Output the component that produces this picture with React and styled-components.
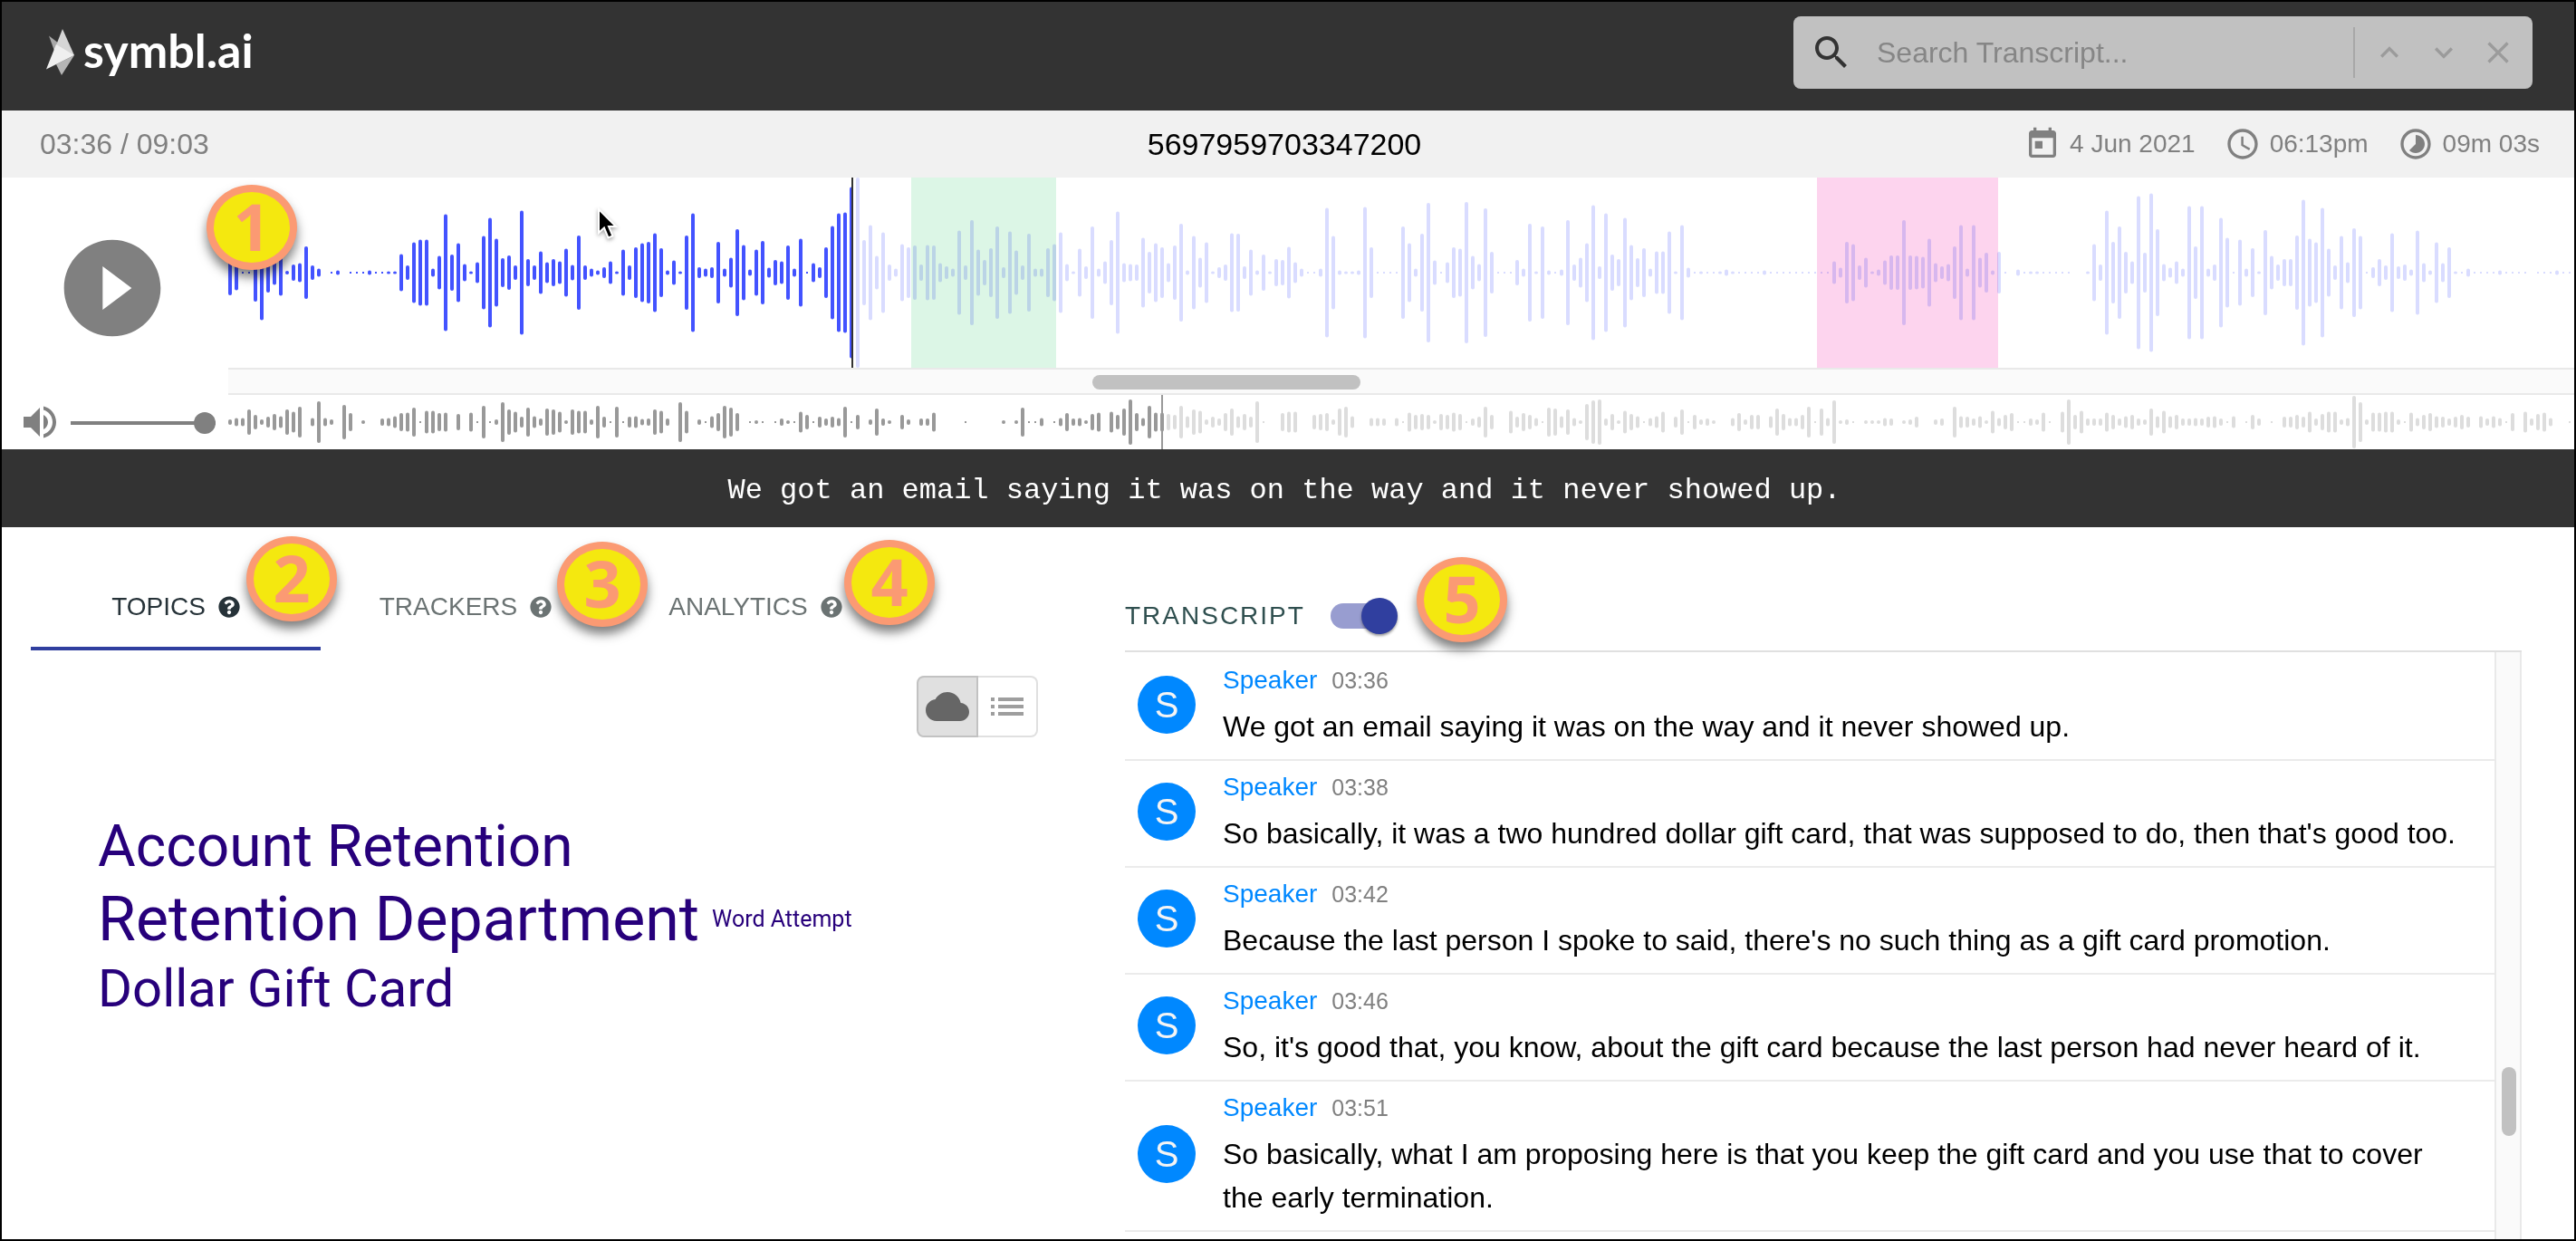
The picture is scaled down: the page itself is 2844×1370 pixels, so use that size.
import React, { useState } from "react";
import styled, { createGlobalStyle, css } from "styled-components";
import { FaQuestionCircle } from "react-icons/fa";

const GlobalStyle = createGlobalStyle`
  *, *::before, *::after { box-sizing: border-box; }
  body { margin: 0; background: #fff; }
  body, button, input { font-family: "Liberation Sans", Arial, sans-serif; }
  button { border: 0; padding: 0; background: none; cursor: pointer; }
`;

/* ---------- data ---------- */

const WAVE = [
  75, 58, 2, 2, 96, 158, 66, 40, 77, 6, 27, 31, 87, 24, 13, 0, 2, 8, 0, 2, 2, 2, 8, 2, 2, 5, 5, 62, 24, 100,
  110, 110, 13, 55, 194, 60, 97, 29, 5, 34, 121, 181, 113, 48, 57, 24, 205, 45, 24, 71, 34, 45, 37, 79, 26, 123, 24, 13, 8, 18,
  37, 5, 76, 24, 84, 97, 102, 131, 81, 8, 40, 5, 123, 197, 18, 13, 18, 102, 13, 50, 144, 92, 10, 76, 105, 16, 42, 37, 90, 13,
  113, 2, 31, 18, 84, 155, 197, 200, 284, 315, 108, 157, 55, 134, 27, 13, 95, 84, 90, 27, 92, 90, 31, 21, 13, 140, 24, 174, 76, 42,
  81, 153, 18, 136, 73, 24, 129, 13, 13, 81, 95, 134, 29, 5, 79, 21, 153, 13, 37, 108, 202, 31, 29, 27, 115, 69, 97, 84, 31, 90,
  162, 8, 121, 50, 100, 5, 18, 27, 131, 129, 21, 76, 8, 60, 5, 45, 42, 86, 34, 13, 2, 2, 13, 215, 121, 8, 5, 5, 8, 218,
  84, 2, 2, 2, 2, 153, 97, 13, 129, 231, 40, 2, 34, 84, 79, 234, 55, 29, 213, 69, 2, 2, 2, 42, 13, 162, 5, 153, 8, 2,
  10, 174, 27, 50, 97, 223, 21, 197, 60, 45, 181, 92, 48, 81, 13, 71, 71, 136, 5, 157, 16, 2, 5, 2, 2, 5, 10, 5, 2, 2,
  2, 2, 8, 2, 2, 2, 2, 2, 2, 2, 2, 2, 2, 37, 16, 102, 95, 24, 50, 5, 10, 40, 57, 57, 174, 57, 55, 52, 113, 31,
  21, 29, 87, 157, 13, 157, 50, 66, 8, 69, 2, 0, 10, 2, 5, 5, 2, 2, 2, 2, 2, 0, 0, 5, 95, 27, 205, 102, 153, 69,
  37, 254, 66, 262, 144, 29, 16, 37, 13, 220, 87, 220, 13, 27, 181, 115, 2, 110, 13, 81, 5, 141, 55, 27, 45, 45, 123, 241, 113, 100,
  215, 79, 24, 121, 34, 147, 121, 2, 18, 45, 24, 131, 21, 27, 10, 140, 31, 8, 100, 31, 84, 5, 2, 13, 2, 2, 2, 2, 8, 2,
  2, 2, 2, 0, 2, 2, 2, 8, 2, 2,
];

const OVERVIEW = [
  9, 14, 14, 42, 24, 9, 18, 27, 20, 42, 35, 51, 0, 14, 69, 14, 9, 0, 57, 30, 0, 6, 0, 0, 12, 14, 20, 30, 32, 48,
  2, 38, 38, 30, 32, 0, 27, 0, 32, 2, 54, 2, 9, 66, 42, 35, 18, 48, 20, 12, 45, 42, 35, 6, 42, 38, 38, 9, 54, 18,
  2, 51, 2, 18, 20, 10, 12, 42, 38, 12, 0, 66, 38, 0, 9, 2, 20, 30, 54, 48, 30, 0, 2, 6, 2, 0, 2, 12, 6, 2,
  35, 24, 2, 18, 12, 18, 14, 51, 2, 24, 0, 9, 45, 12, 6, 0, 24, 9, 0, 12, 12, 32, 0, 0, 0, 0, 3, 0, 0, 0,
  0, 0, 6, 0, 6, 48, 2, 2, 14, 0, 3, 14, 30, 12, 14, 6, 27, 32, 0, 35, 24, 45, 75, 30, 14, 54, 32, 32, 27, 24,
  54, 20, 42, 38, 9, 18, 12, 30, 45, 20, 27, 18, 69, 2, 0, 0, 30, 35, 35, 0, 0, 24, 27, 30, 9, 45, 51, 20, 0, 0,
  14, 14, 12, 0, 14, 2, 32, 24, 27, 24, 6, 27, 24, 32, 27, 2, 12, 18, 51, 24, 0, 0, 38, 18, 30, 24, 14, 2, 48, 45,
  20, 42, 14, 6, 60, 72, 75, 12, 27, 6, 38, 27, 20, 2, 14, 20, 35, 0, 18, 42, 2, 24, 9, 12, 6, 0, 0, 14, 30, 9,
  24, 24, 0, 20, 45, 27, 14, 14, 24, 51, 2, 45, 14, 72, 6, 9, 2, 0, 6, 6, 6, 14, 12, 0, 6, 9, 18, 0, 0, 9,
  12, 0, 51, 20, 18, 12, 20, 6, 38, 14, 24, 30, 2, 2, 12, 9, 32, 2, 0, 35, 75, 24, 38, 12, 12, 12, 32, 24, 12, 20,
  24, 12, 9, 45, 20, 38, 20, 24, 12, 12, 14, 12, 18, 20, 12, 2, 20, 0, 2, 24, 12, 0, 2, 0, 18, 18, 24, 18, 35, 12,
  27, 35, 35, 9, 14, 87, 66, 9, 32, 32, 35, 35, 9, 2, 32, 14, 24, 30, 20, 18, 12, 18, 24, 18, 0, 20, 12, 20, 14, 2,
  30, 0, 35, 12, 27, 32, 14, 0, 0, 2,
];

const REGIONS = [
  { x: 754, width: 160, fill: "#dcf6e6" },
  { x: 1754, width: 200, fill: "#fdd4ee" },
];

const CAPTION = "We got an email saying it was on the way and it never showed up.";

const LINES = [
  ["03:36", CAPTION],
  ["03:38", "So basically, it was a two hundred dollar gift card, that was supposed to do, then that's good too."],
  ["03:42", "Because the last person I spoke to said, there's no such thing as a gift card promotion."],
  ["03:46", "So, it's good that, you know, about the gift card because the last person had never heard of it."],
  ["03:51", "So basically, what I am proposing here is that you keep the gift card and you use that to cover the early termination."],
];

const TABS = [
  { name: "TOPICS", badge: 2, left: 238, top: -30 },
  { name: "TRACKERS", badge: 3, left: 261, top: -24 },
  { name: "ANALYTICS", badge: 4, left: 258, top: -26 },
];

const ICONS = {
  search: "M15.5 14h-.79l-.28-.27C15.41 12.59 16 11.11 16 9.5 16 5.91 13.09 3 9.5 3S3 5.91 3 9.5 5.91 16 9.5 16c1.61 0 3.09-.59 4.23-1.57l.27.28v.79l5 4.99L20.49 19l-4.99-5zm-6 0C7.01 14 5 11.99 5 9.5S7.01 5 9.5 5 14 7.01 14 9.5 11.99 14 9.5 14z",
  up: "M12 8l-6 6 1.41 1.41L12 10.83l4.59 4.58L18 14z",
  down: "M16.59 8.59L12 13.17 7.41 8.59 6 10l6 6 6-6z",
  close: "M19 6.41L17.59 5 12 10.59 6.41 5 5 6.41 10.59 12 5 17.59 6.41 19 12 13.41 17.59 19 19 17.59 13.41 12z",
  today: "M19 3h-1V1h-2v2H8V1H6v2H5c-1.11 0-1.99.9-1.99 2L3 19c0 1.1.89 2 2 2h14c1.1 0 2-.9 2-2V5c0-1.1-.9-2-2-2zm0 16H5V8h14v11zM7 10h5v5H7z",
  clock: "M11.99 2C6.47 2 2 6.48 2 12s4.47 10 9.99 10C17.52 22 22 17.52 22 12S17.52 2 11.99 2zM12 20c-4.42 0-8-3.58-8-8s3.58-8 8-8 8 3.58 8 8-3.58 8-8 8zm.5-13H11v6l5.25 3.15.75-1.23-4.5-2.67z",
  timelapse: "M16.24 7.76C15.07 6.59 13.54 6 12 6v6l-4.24 4.24c2.34 2.34 6.14 2.34 8.49 0 2.34-2.34 2.34-6.14-.01-8.48zM12 2C6.48 2 2 6.48 2 12s4.48 10 10 10 10-4.48 10-10S17.52 2 12 2zm0 18c-4.42 0-8-3.58-8-8s3.58-8 8-8 8 3.58 8 8-3.58 8-8 8z",
  play: "M12 2C6.48 2 2 6.48 2 12s4.48 10 10 10 10-4.48 10-10S17.52 2 12 2zm-2 14.5v-9l6 4.5-6 4.5z",
  volume: "M3 9v6h4l5 5V4L7 9H3zm13.5 3c0-1.77-1.02-3.29-2.5-4.03v8.05c1.48-.73 2.5-2.25 2.5-4.02zM14 3.23v2.06c2.89.86 5 3.54 5 6.71s-2.11 5.85-5 6.71v2.06c4.01-.91 7-4.49 7-8.77s-2.99-7.86-7-8.77z",
  cloud: "M19.35 10.04C18.67 6.59 15.64 4 12 4 9.11 4 6.6 5.64 5.35 8.04 2.34 8.36 0 10.91 0 14c0 3.31 2.69 6 6 6h13c2.76 0 5-2.24 5-5 0-2.64-2.05-4.78-4.65-4.96z",
  list: "M3 13h2v-2H3v2zm0 4h2v-2H3v2zm0-8h2V7H3v2zm4 4h14v-2H7v2zm0 4h14v-2H7v2zM7 7v2h14V7H7z",
};

/* ---------- shared parts ---------- */

const Svg = styled.svg`
  display: block;
  flex: none;
  width: ${(p) => p.$size}px;
  height: ${(p) => p.$size}px;
  fill: currentColor;
`;

function Icon({ name, size = 40 }) {
  return (
    <Svg viewBox="0 0 24 24" $size={size} aria-hidden="true">
      <path d={ICONS[name]} />
    </Svg>
  );
}

const Badge = styled.span`
  position: absolute;
  z-index: 2;
  left: ${(p) => p.$left}px;
  top: ${(p) => p.$top}px;
  width: 100px;
  height: 94px;
  display: flex;
  align-items: center;
  justify-content: center;
  border: 8px solid #fb9a73;
  border-radius: 50%;
  background: #f4e80f;
  color: #fb9a73;
  font: 700 72px/74px "Open Sans", "Noto Sans", sans-serif;
  padding-bottom: 4px;
  box-shadow: 0 8px 12px rgba(0, 0, 0, 0.5);
`;

/* ---------- page frame ---------- */

const Page = styled.div`
  display: flex;
  flex-direction: column;
  height: 100vh;
  overflow: hidden;
  border: 2px solid #000;
  background: #fff;
`;

const Header = styled.header`
  flex: none;
  display: flex;
  justify-content: space-between;
  align-items: flex-start;
  height: 120px;
  padding: 16px 46px 0 48px;
  background: #333;
`;

const Logo = styled.a`
  display: flex;
  align-items: center;
  gap: 8px;
  height: 80px;
  color: #fff;
  font: 700 52px/72px Lato, sans-serif;
  text-decoration: none;
`;

const LogoMark = styled.svg`
  display: block;
  width: 34px;
  height: 54px;
`;

const LogoText = styled.span`
  padding-bottom: 6px;
`;

const SearchBox = styled.form`
  display: flex;
  align-items: center;
  width: 816px;
  height: 80px;
  padding: 0 8px 0 18px;
  border-radius: 8px;
  background: #c1c1c1;
  color: #333;
`;

const SearchInput = styled.input`
  flex: 1;
  min-width: 0;
  height: 56px;
  margin-left: 26px;
  padding: 0;
  border: 0;
  outline: 0;
  background: none;
  color: #333;
  font-size: 32px;
  &::placeholder { color: #868686; opacity: 1; }
`;

const SearchDivider = styled.span`
  width: 2px;
  height: 56px;
  margin-right: 8px;
  background: #a8a8a8;
`;

const SearchButton = styled.button`
  padding: 10px;
  color: #9b9b9b;
`;

const MetaBar = styled.section`
  flex: none;
  display: grid;
  grid-template-columns: 1fr auto 1fr;
  align-items: center;
  height: 74px;
  padding: 0 38px 0 42px;
  background: #f1f1f1;
  color: #808080;
  font-size: 28px;
`;

const Elapsed = styled.span`
  font-size: 32px;
`;

const Title = styled.h1`
  margin: 0;
  padding-right: 12px;
  color: #000;
  font-size: 34px;
  font-weight: 400;
`;

const MetaList = styled.div`
  display: flex;
  justify-content: flex-end;
  gap: 32px;
`;

const MetaItem = styled.span`
  display: flex;
  align-items: center;
  gap: 10px;
  white-space: nowrap;
`;

/* ---------- player ---------- */

const Player = styled.section`
  flex: none;
  position: relative;
  display: flex;
`;

const Controls = styled.div`
  flex: none;
  width: 250px;
  display: flex;
  flex-direction: column;
`;

const PlayArea = styled.div`
  display: flex;
  align-items: center;
  height: 240px;
  padding: 4px 0 0 58px;
  color: #808080;
`;

const PlayButton = styled.button`
  color: inherit;
`;

const VolumeRow = styled.label`
  display: flex;
  align-items: center;
  gap: 10px;
  height: 60px;
  padding-left: 18px;
  color: #808080;
`;

const VolumeSlider = styled.input`
  appearance: none;
  width: 160px;
  height: 24px;
  margin: 2px 0 0;
  background: linear-gradient(#808080, #808080) center / 100% 4px no-repeat;
  &::-webkit-slider-thumb {
    appearance: none;
    width: 24px;
    height: 24px;
    border-radius: 50%;
    background: #808080;
  }
`;

const Waves = styled.div`
  flex: 1;
  min-width: 0;
`;

const WaveSvg = styled.svg`
  display: block;
  width: 100%;
  height: ${(p) => p.$height}px;
`;

const WaveScroll = styled.div`
  position: relative;
  height: 30px;
  border: solid #e9e9e9;
  border-width: 2px 0;
  background: #fafafa;
`;

const WaveScrollThumb = styled.span`
  position: absolute;
  top: 6px;
  height: 16px;
  border-radius: 8px;
  background: #c1c1c1;
`;

const Pointer = styled.svg`
  position: absolute;
  left: 654px;
  top: 32px;
  width: 28px;
  height: 42px;
  filter: drop-shadow(0 2px 2px rgba(0, 0, 0, 0.35));
`;

const Caption = styled.p`
  flex: none;
  margin: 0;
  padding: 6px 8px 0 0;
  background: #333;
  color: #fff;
  font: 32px/80px "Liberation Mono", "Courier New", monospace;
  text-align: center;
`;

function Waveform({ bars, height, center, played, on, off, line, regions = [] }) {
  return (
    <WaveSvg $height={height} aria-hidden="true">
      {bars.map((v, i) => {
        if (!v) return null;
        const x = i * 7;
        const fill = x < played ? on : off;
        if (v < 4) return <rect key={i} x={x + 1} y={center - 1} width="2" height="2" fill={fill} />;
        const h = Math.round((v * 2) / 3);
        return <rect key={i} x={x} y={center - h / 2} width="4" height={h} rx="2" fill={fill} />;
      })}
      {regions.map((r) => (
        <rect key={r.x} x={r.x} y="0" width={r.width} height={height} fill={r.fill} style={{ mixBlendMode: "multiply" }} />
      ))}
      <rect x={played} y="0" width="2" height={height} fill={line} />
    </WaveSvg>
  );
}

/* ---------- panels ---------- */

const Main = styled.main`
  flex: 1;
  min-height: 0;
  display: grid;
  grid-template-columns: 1112fr 1542fr;
  gap: 96px;
  padding: 40px 58px 0 32px;
`;

const Panel = styled.section`
  display: flex;
  flex-direction: column;
  min-width: 0;
  min-height: 0;
`;

const TabBar = styled.div`
  display: flex;
`;

const TabCell = styled.div`
  position: relative;
  flex: 0 0 320px;
`;

const Tab = styled.button`
  display: flex;
  align-items: center;
  justify-content: center;
  gap: 14px;
  width: 100%;
  height: 96px;
  border: solid transparent;
  border-width: 4px 0;
  color: #6b7373;
  font-size: 28px;
  ${(p) =>
    p.$active &&
    css`
      color: #263238;
      border-bottom-color: #303f9f;
    `}
`;

const ViewSwitch = styled.div`
  display: flex;
  align-self: flex-end;
  margin-top: 28px;
`;

const ViewButton = styled.button`
  padding: 8px;
  border: 2px solid ${(p) => (p.$active ? "#c2c2c2" : "#e0e0e0")};
  background: ${(p) => (p.$active ? "#e0e0e0" : "#fff")};
  color: ${(p) => (p.$active ? "#666" : "#9e9e9e")};
  &:first-child {
    border-radius: 8px 0 0 8px;
  }
  &:last-child {
    border-left: 0;
    border-radius: 0 8px 8px 0;
  }
`;

const Cloud = styled.div`
  display: flex;
  flex-direction: column;
  margin-top: 82px;
  padding-left: 74px;
`;

const CloudRow = styled.div`
  display: flex;
  align-items: center;
  gap: 14px;
`;

const Word = styled.span`
  color: #27007b;
  font-family: Roboto, sans-serif;
  font-size: ${(p) => p.$size}px;
  line-height: ${(p) => p.$line}px;
  white-space: nowrap;
`;

const TranscriptHeader = styled.div`
  flex: none;
  position: relative;
  display: flex;
  align-items: center;
  height: 98px;
  padding-top: 20px;
  border-bottom: 2px solid #e0e0e0;
`;

const SwitchLabel = styled.label`
  display: flex;
  align-items: center;
  gap: 28px;
  color: #2f4f4f;
  font-size: 28px;
  letter-spacing: 2px;
`;

const Switch = styled.input`
  appearance: none;
  position: relative;
  display: flex;
  align-items: center;
  width: 74px;
  height: 40px;
  margin: 0;
  &::before {
    content: "";
    width: 68px;
    height: 28px;
    border-radius: 14px;
    background: #989dd0;
  }
  &::after {
    content: "";
    position: absolute;
    top: 0;
    left: ${(p) => (p.checked ? 34 : 0)}px;
    width: 40px;
    height: 40px;
    border-radius: 50%;
    background: #303f9f;
    box-shadow: 0 2px 3px rgba(0, 0, 0, 0.4);
  }
`;

const TranscriptBody = styled.div`
  flex: 1;
  min-height: 0;
  display: flex;
  overflow: hidden;
`;

const Lines = styled.ul`
  flex: 1;
  min-width: 0;
  margin: 0;
  padding: 2px 0 0;
  list-style: none;
`;

const Line = styled.li`
  display: flex;
  align-items: center;
  gap: 30px;
  padding: 8px 32px 12px 14px;
  border-bottom: 2px solid #ebebeb;
`;

const Avatar = styled.span`
  flex: none;
  width: 64px;
  border-radius: 50%;
  background: #0088ff;
  color: #f4f4f4;
  font-size: 40px;
  line-height: 64px;
  text-align: center;
`;

const LineHead = styled.div`
  display: flex;
  align-items: baseline;
  gap: 16px;
  line-height: 42px;
  margin-bottom: 6px;
`;

const Speaker = styled.span`
  color: #0088ff;
  font-size: 28px;
`;

const Stamp = styled.time`
  color: #808080;
  font-size: 25px;
`;

const Said = styled.p`
  margin: 0;
  color: #000;
  font-size: 32px;
  line-height: 48px;
`;

const Track = styled.div`
  flex: none;
  position: relative;
  width: 30px;
  border: solid #e9e9e9;
  border-width: 0 2px;
  background: #fafafa;
`;

const TrackThumb = styled.span`
  position: absolute;
  left: 6px;
  width: 16px;
  height: 76px;
  border-radius: 8px;
  background: #c1c1c1;
`;

export default function App() {
  const [tab, setTab] = useState("TOPICS");
  const [view, setView] = useState("cloud");
  const [follow, setFollow] = useState(true);

  return (
    <>
      <GlobalStyle />
      <Page>
        <Header>
          <Logo href="#">
            <LogoMark viewBox="0 0 34 54" aria-hidden="true">
              <path d="M4 8.500L32 30L11 28z" fill="#a9a9a9" />
              <path d="M19 1L32 30L10 24z" fill="#d6d6d6" />
              <path d="M18 52L32 30L12 40z" fill="#b5b5b5" />
              <path d="M1 45.500L12 18L32 30z" fill="#efefef" />
            </LogoMark>
            <LogoText>symbl.ai</LogoText>
          </Logo>
          <SearchBox role="search" onSubmit={(e) => e.preventDefault()}>
            <Icon name="search" size={48} />
            <SearchInput type="text" placeholder="Search Transcript..." aria-label="Search Transcript" />
            <SearchDivider />
            <SearchButton type="button" aria-label="Previous match"><Icon name="up" /></SearchButton>
            <SearchButton type="button" aria-label="Next match"><Icon name="down" /></SearchButton>
            <SearchButton type="button" aria-label="Clear search"><Icon name="close" /></SearchButton>
          </SearchBox>
        </Header>

        <MetaBar>
          <Elapsed>03:36 / 09:03</Elapsed>
          <Title>5697959703347200</Title>
          <MetaList>
            <MetaItem><Icon name="today" />4 Jun 2021</MetaItem>
            <MetaItem><Icon name="clock" />06:13pm</MetaItem>
            <MetaItem><Icon name="timelapse" />09m 03s</MetaItem>
          </MetaList>
        </MetaBar>

        <Player>
          <Controls>
            <PlayArea>
              <PlayButton type="button" aria-label="Play"><Icon name="play" size={128} /></PlayButton>
            </PlayArea>
            <VolumeRow>
              <Icon name="volume" size={48} />
              <VolumeSlider type="range" min="0" max="100" defaultValue="100" aria-label="Volume" />
            </VolumeRow>
          </Controls>
          <Waves>
            <Waveform bars={WAVE} height={210} center={105} played={688} on="#4353ff" off="#d9dcff" line="#333" regions={REGIONS} />
            <WaveScroll>
              <WaveScrollThumb style={{ left: `${(954 / 2590) * 100}%`, width: `${(296 / 2590) * 100}%` }} />
            </WaveScroll>
            <Waveform bars={OVERVIEW} height={60} center={30} played={1030} on="#999" off="#ddd" line="#999" />
          </Waves>
          <Badge $left={226} $top={8}>1</Badge>
          <Pointer viewBox="0 0 28 42" aria-hidden="true">
            <path d="M5 3V29L11 23.500L15.500 34.500L20.500 32.500L16 22H24z" fill="#000" stroke="#fff" strokeWidth="2" />
          </Pointer>
        </Player>

        <Caption>{CAPTION}</Caption>

        <Main>
          <Panel>
            <TabBar role="tablist">
              {TABS.map((t) => (
                <TabCell key={t.name}>
                  <Tab type="button" role="tab" aria-selected={tab === t.name} $active={tab === t.name} onClick={() => setTab(t.name)}>
                    {t.name}
                    <FaQuestionCircle size={24} />
                  </Tab>
                  <Badge $left={t.left} $top={t.top}>{t.badge}</Badge>
                </TabCell>
              ))}
            </TabBar>
            <ViewSwitch>
              <ViewButton type="button" aria-label="Word cloud" $active={view === "cloud"} onClick={() => setView("cloud")}>
                <Icon name="cloud" size={48} />
              </ViewButton>
              <ViewButton type="button" aria-label="List" $active={view === "list"} onClick={() => setView("list")}>
                <Icon name="list" size={48} />
              </ViewButton>
            </ViewSwitch>
            <Cloud>
              <CloudRow><Word $size={64} $line={78}>Account Retention</Word></CloudRow>
              <CloudRow>
                <Word $size={68} $line={82}>Retention Department</Word>
                <Word $size={25} $line={30}>Word Attempt</Word>
              </CloudRow>
              <CloudRow><Word $size={58} $line={70}>Dollar Gift Card</Word></CloudRow>
            </Cloud>
          </Panel>

          <Panel>
            <TranscriptHeader>
              <SwitchLabel>
                TRANSCRIPT
                <Switch type="checkbox" role="switch" checked={follow} onChange={(e) => setFollow(e.target.checked)} />
              </SwitchLabel>
              <Badge $left={322} $top={-7}>5</Badge>
            </TranscriptHeader>
            <TranscriptBody>
              <Lines>
                {LINES.map(([time, text]) => (
                  <Line key={time}>
                    <Avatar>S</Avatar>
                    <div>
                      <LineHead>
                        <Speaker>Speaker</Speaker>
                        <Stamp>{time}</Stamp>
                      </LineHead>
                      <Said>{text}</Said>
                    </div>
                  </Line>
                ))}
              </Lines>
              <Track>
                <TrackThumb style={{ top: `${(458 / 648) * 100}%` }} />
              </Track>
            </TranscriptBody>
          </Panel>
        </Main>
      </Page>
    </>
  );
}
